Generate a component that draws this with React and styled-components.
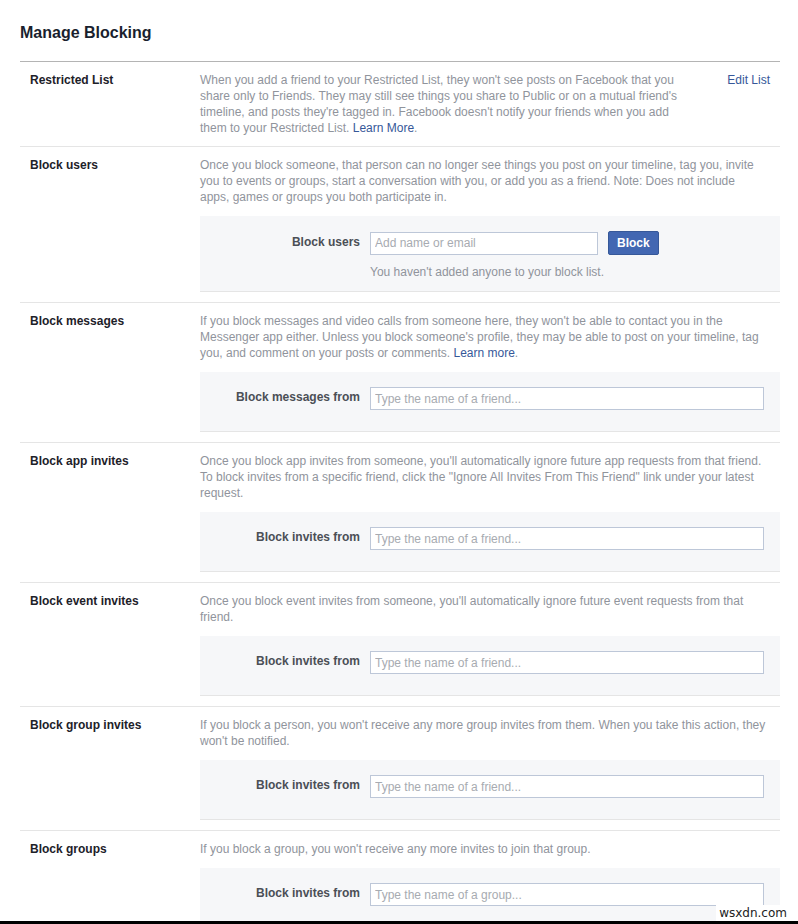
import styled, { createGlobalStyle } from "styled-components";

const GlobalStyle = createGlobalStyle`
  html, body {
    margin: 0;
    padding: 0;
    background: #fff;
  }
  body {
    font-family: "Liberation Sans", Arial, sans-serif;
    font-size: 12px;
    color: #1d2129;
  }
`;

const Page = styled.div`
  position: relative;
  height: 924px;
  overflow: hidden;
  padding: 0 18px 0 20px;
`;

const Title = styled.h2`
  margin: 0;
  padding: 24px 0 19px;
  font-size: 16px;
  font-weight: bold;
  line-height: 18px;
  color: #1a1f2e;
`;

const List = styled.div`
  border-top: 1px solid #b4b4b4;
`;

const Row = styled.div`
  display: flex;
  padding: 10px 0 10px;
  border-bottom: 1px solid #e5e5e5;
`;

const RowLabel = styled.div`
  box-sizing: border-box;
  flex: none;
  width: 180px;
  padding-left: 10px;
  font-weight: bold;
  line-height: 16px;
  color: #1d2129;
`;

const RowBody = styled.div`
  flex: 1;
  min-width: 0;
`;

const DescLine = styled.div`
  display: flex;
  justify-content: space-between;
  padding-right: 10px;
`;

const Desc = styled.div`
  max-width: ${(p) => (p.maxWidth ? `${p.maxWidth}px` : "none")};
  line-height: 16px;
  color: #90949c;
`;

const Link = styled.a`
  color: #365899;
  text-decoration: none;
  cursor: pointer;
`;

const EditLink = styled(Link)`
  line-height: 16px;
`;

const Box = styled.div`
  margin-top: 11px;
  background: #f6f7f9;
  border-bottom: 1px solid #e5e5e5;
  padding: 15px 16px ${(p) => (p.hint ? "11px" : "21px")} 0;
`;

const Field = styled.div`
  display: flex;
  align-items: center;
`;

const FieldLabel = styled.label`
  flex: none;
  width: 170px;
  padding-right: 10px;
  box-sizing: border-box;
  text-align: right;
  font-weight: bold;
  color: #4b4f56;
  line-height: 16px;
  margin-top: -3px;
`;

const Input = styled.input`
  box-sizing: border-box;
  height: 23px;
  width: ${(p) => (p.short ? "228px" : "auto")};
  flex: ${(p) => (p.short ? "none" : "1")};
  min-width: 0;
  border: 1px solid #bdc7d8;
  background: #fff;
  padding: 0 4px;
  font-family: inherit;
  font-size: 12px;
  color: #1d2129;
  outline: none;
  &::placeholder {
    color: #a7abb1;
  }
`;

const Button = styled.button`
  margin-left: 10px;
  height: 24px;
  padding: 0 8px;
  border: 1px solid #365899;
  border-radius: 2px;
  background: #4267b2;
  color: #fff;
  font-family: inherit;
  font-size: 12px;
  font-weight: bold;
  cursor: pointer;
`;

const Hint = styled.div`
  margin: 9px 0 0 170px;
  line-height: 16px;
  color: #90949c;
`;

const Watermark = styled.div`
  position: absolute;
  right: 8px;
  bottom: 3px;
  padding: 0 3px;
  background: #fff;
  font-family: "DejaVu Sans", sans-serif;
  font-size: 12px;
  line-height: 16px;
  color: #222;
`;

const BottomBar = styled.div`
  position: absolute;
  left: 0;
  right: 0;
  bottom: 0;
  height: 3px;
  background: #000;
`;

const sections = [
  {
    id: "messages",
    title: "Block messages",
    text: (
      <>
        If you block messages and video calls from someone here, they won't be able to contact you in the
        Messenger app either. Unless you block someone's profile, they may be able to post on your timeline, tag
        you, and comment on your posts or comments. <Link>Learn more</Link>.
      </>
    ),
    label: "Block messages from",
    placeholder: "Type the name of a friend...",
  },
  {
    id: "apps",
    title: "Block app invites",
    text: (
      <>
        Once you block app invites from someone, you'll automatically ignore future app requests from that friend.
        To block invites from a specific friend, click the "Ignore All Invites From This Friend" link under your latest
        request.
      </>
    ),
    label: "Block invites from",
    placeholder: "Type the name of a friend...",
  },
  {
    id: "events",
    title: "Block event invites",
    text: "Once you block event invites from someone, you'll automatically ignore future event requests from that friend.",
    label: "Block invites from",
    placeholder: "Type the name of a friend...",
  },
  {
    id: "group-invites",
    title: "Block group invites",
    text: "If you block a person, you won't receive any more group invites from them. When you take this action, they won't be notified.",
    label: "Block invites from",
    placeholder: "Type the name of a friend...",
  },
  {
    id: "groups",
    title: "Block groups",
    text: "If you block a group, you won't receive any more invites to join that group.",
    label: "Block invites from",
    placeholder: "Type the name of a group...",
  },
];

const App = () => {
  return (
    <>
      <GlobalStyle />
      <Page>
        <Title>Manage Blocking</Title>
        <List>
          <Row>
            <RowLabel>Restricted List</RowLabel>
            <RowBody>
              <DescLine>
                <Desc maxWidth={497}>
                  When you add a friend to your Restricted List, they won't see posts on Facebook that you share
                  only to Friends. They may still see things you share to Public or on a mutual friend's timeline,
                  and posts they're tagged in. Facebook doesn't notify your friends when you add them to your
                  Restricted List. <Link>Learn More</Link>.
                </Desc>
                <EditLink>Edit List</EditLink>
              </DescLine>
            </RowBody>
          </Row>

          <Row>
            <RowLabel>Block users</RowLabel>
            <RowBody>
              <DescLine>
                <Desc maxWidth={560}>
                  Once you block someone, that person can no longer see things you post on your timeline, tag you,
                  invite you to events or groups, start a conversation with you, or add you as a friend. Note: Does
                  not include apps, games or groups you both participate in.
                </Desc>
              </DescLine>
              <Box hint>
                <Field>
                  <FieldLabel>Block users</FieldLabel>
                  <Input short placeholder="Add name or email" />
                  <Button>Block</Button>
                </Field>
                <Hint>You haven't added anyone to your block list.</Hint>
              </Box>
            </RowBody>
          </Row>

          {sections.map((s) => (
            <Row key={s.id}>
              <RowLabel>{s.title}</RowLabel>
              <RowBody>
                <DescLine>
                  <Desc>{s.text}</Desc>
                </DescLine>
                <Box>
                  <Field>
                    <FieldLabel>{s.label}</FieldLabel>
                    <Input placeholder={s.placeholder} />
                  </Field>
                </Box>
              </RowBody>
            </Row>
          ))}
        </List>
        <Watermark>wsxdn.com</Watermark>
        <BottomBar />
      </Page>
    </>
  );
};

export default App;
